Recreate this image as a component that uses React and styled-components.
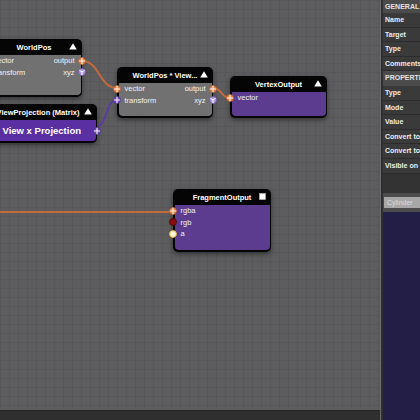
import React from 'react';
import styled, { createGlobalStyle } from 'styled-components';

const GlobalStyle = createGlobalStyle`
  html, body {
    margin: 0;
    padding: 0;
    background: #231e46;
  }
  * {
    box-sizing: border-box;
  }
`;

const ORANGE = '#c4693a';
const PURPLE = '#5b3c9e';

const nodes = [
  {
    id: 'worldpos',
    title: 'WorldPos',
    x: -14, y: 39, w: 96, bodyH: 40,
    tone: 'gray',
    icon: 'triangle',
    rows: [
      { left: 'vector', inPort: 'orange', right: 'output', outPort: 'orange' },
      { left: 'transform', inPort: 'purple', right: 'xyz', outPort: 'xyz' },
    ],
  },
  {
    id: 'viewproj',
    title: 'ViewProjection (Matrix)',
    x: -21, y: 104, w: 118, bodyH: 21,
    tone: 'violet',
    icon: 'triangle',
    value: 'View x Projection',
    valuePort: 'purple',
  },
  {
    id: 'mul',
    title: 'WorldPos * View...',
    x: 117, y: 67, w: 96, bodyH: 33,
    tone: 'gray',
    icon: 'triangle',
    rows: [
      { left: 'vector', inPort: 'orange', right: 'output', outPort: 'orange' },
      { left: 'transform', inPort: 'purple', right: 'xyz', outPort: 'xyz' },
    ],
  },
  {
    id: 'vertex',
    title: 'VertexOutput',
    x: 230, y: 76, w: 97, bodyH: 24,
    tone: 'purple',
    icon: 'triangle',
    rows: [{ left: 'vector', inPort: 'orange' }],
  },
  {
    id: 'fragment',
    title: 'FragmentOutput',
    x: 173, y: 189, w: 98, bodyH: 45,
    tone: 'purple',
    icon: 'square',
    rows: [
      { left: 'rgba', inPort: 'orange' },
      { left: 'rgb', inPort: 'red' },
      { left: 'a', inPort: 'alpha' },
    ],
  },
];

const wires = [
  { d: 'M82 61 C100 61, 99 88, 117 88', color: ORANGE },
  { d: 'M96 126 C108 126, 105 100, 117 100', color: PURPLE },
  { d: 'M213 88 C222 88, 221 98, 230 98', color: ORANGE },
  { d: 'M-10 212 L173 212', color: ORANGE },
];

const inspector = [
  { head: true, label: 'GENERAL' },
  { label: 'Name' },
  { label: 'Target' },
  { label: 'Type' },
  { label: 'Comments' },
  { head: true, label: 'PROPERTIES' },
  { label: 'Type' },
  { label: 'Mode' },
  { label: 'Value' },
  { label: 'Convert to global' },
  { label: 'Convert to linear' },
  { label: 'Visible on fragment' },
];

const PortIcon = ({ kind }) => {
  if (kind === 'red') {
    return (
      <svg width="8" height="8" viewBox="0 0 8 8">
        <circle cx="4" cy="4" r="3.5" fill="#8c0d0d" stroke="#4a0606" strokeWidth="0.8" />
      </svg>
    );
  }
  if (kind === 'alpha') {
    return (
      <svg width="8" height="8" viewBox="0 0 8 8">
        <circle cx="4" cy="4" r="3.4" fill="#fff7d6" stroke="#e2b23a" strokeWidth="1" />
      </svg>
    );
  }
  if (kind === 'xyz') {
    return (
      <svg width="8" height="8" viewBox="0 0 8 8">
        <circle cx="4" cy="4" r="3.5" fill="#a996dc" stroke="#6a52a8" strokeWidth="0.7" />
        <path d="M4 4 L4 7.2 M4 4 L1.3 2.2 M4 4 L6.7 2.2" stroke="#fff" strokeWidth="1" fill="none" />
      </svg>
    );
  }
  const fill = kind === 'purple' ? '#6d4cc0' : '#e0874d';
  const ring = kind === 'purple' ? '#43297e' : '#b25624';
  return (
    <svg width="8" height="8" viewBox="0 0 8 8">
      <circle cx="4" cy="4" r="3.5" fill={fill} stroke={ring} strokeWidth="0.7" />
      <path d="M4 0.8 L4 7.2 M0.8 4 L7.2 4" stroke="#fbeee4" strokeWidth="1.1" />
    </svg>
  );
};

const HeaderIcon = ({ kind }) =>
  kind === 'square' ? (
    <svg width="7" height="7" viewBox="0 0 7 7">
      <rect x="0.5" y="0.5" width="6" height="6" fill="#fff" stroke="#bbb" strokeWidth="0.6" />
    </svg>
  ) : (
    <svg width="8" height="7" viewBox="0 0 8 7">
      <path d="M4 0.3 L7.8 6.6 L0.2 6.6 Z" fill="#fff" />
    </svg>
  );

const GraphNode = ({ node }) => (
  <Node $x={node.x} $y={node.y} $w={node.w}>
    <Header>
      <Title>{node.title}</Title>
      <HeaderIconSlot>
        <HeaderIcon kind={node.icon} />
      </HeaderIconSlot>
    </Header>
    <Body $tone={node.tone} $h={node.bodyH}>
      {node.rows &&
        node.rows.map((row) => (
          <Row key={row.left}>
            {row.inPort && (
              <Port $side="left">
                <PortIcon kind={row.inPort} />
              </Port>
            )}
            <Label>{row.left}</Label>
            {row.right && <Label>{row.right}</Label>}
            {row.outPort && (
              <Port $side="right">
                <PortIcon kind={row.outPort} />
              </Port>
            )}
          </Row>
        ))}
      {node.value && (
        <ValueRow>
          <ValueText>{node.value}</ValueText>
          <Port $side="right">
            <PortIcon kind={node.valuePort} />
          </Port>
        </ValueRow>
      )}
    </Body>
  </Node>
);

const App = () => {
  return (
    <>
      <GlobalStyle />
      <Page>
        <Workspace>
          <Canvas>
            <Wires width="380" height="410" viewBox="0 0 380 410">
              {wires.map((w, i) => (
                <path key={i} d={w.d} stroke={w.color} strokeWidth="2" fill="none" />
              ))}
            </Wires>
            {nodes.map((n) => (
              <GraphNode key={n.id} node={n} />
            ))}
          </Canvas>
          <StatusBar />
        </Workspace>
        <Divider />
        <Sidebar>
          <Inspector>
            {inspector.map((item, i) =>
              item.head ? (
                <SectionHead key={i}>{item.label}</SectionHead>
              ) : (
                <PropRow key={i}>{item.label}</PropRow>
              )
            )}
          </Inspector>
          <SearchStrip>
            <SearchField>Cylinder</SearchField>
          </SearchStrip>
          <Preview />
        </Sidebar>
      </Page>
    </>
  );
};

export default App;

const Page = styled.div`
  display: flex;
  width: 420px;
  height: 420px;
  overflow: hidden;
  background: #231e46;
  font-family: 'Liberation Sans', Arial, sans-serif;
`;

const Workspace = styled.div`
  display: flex;
  flex-direction: column;
  width: 380px;
  flex-shrink: 0;
`;

const Canvas = styled.div`
  position: relative;
  flex: 1;
  overflow: hidden;
  background-color: #5d5c5e;
  background-image: linear-gradient(rgba(0, 0, 0, 0.055) 1px, transparent 1px),
    linear-gradient(90deg, rgba(0, 0, 0, 0.055) 1px, transparent 1px);
  background-size: 9px 9px;
`;

const Wires = styled.svg`
  position: absolute;
  left: 0;
  top: 0;
  overflow: visible;
`;

const StatusBar = styled.div`
  height: 10px;
  background: #2f2f2f;
  border-top: 1px solid #262626;
`;

const Divider = styled.div`
  width: 3px;
  flex-shrink: 0;
  background: #2f2f2f;
  border-left: 1px solid #6a6a6a;
`;

const Sidebar = styled.div`
  flex: 1;
  min-width: 0;
  display: flex;
  flex-direction: column;
  overflow: hidden;
  background: #333333;
`;

const Inspector = styled.div`
  display: flex;
  flex-direction: column;
  height: 193px;
  background: #333333;
`;

const SectionHead = styled.div`
  height: 13px;
  line-height: 13px;
  padding-left: 2px;
  background: #4b4b4b;
  color: #e2e2e2;
  font-size: 7px;
  font-weight: 700;
  white-space: nowrap;
  &:not(:first-child) {
    height: 14.6px;
    line-height: 14.6px;
  }
`;

const PropRow = styled.div`
  height: 14.6px;
  line-height: 14px;
  padding-left: 2px;
  background: #3a3a3a;
  border-bottom: 1px solid #2c2c2c;
  color: #ededed;
  font-size: 7px;
  font-weight: 700;
  white-space: nowrap;
`;

const SearchStrip = styled.div`
  display: flex;
  align-items: center;
  height: 19px;
  padding: 0 0 0 1px;
  background: #4c4c4c;
`;

const SearchField = styled.div`
  flex: 1;
  height: 11px;
  line-height: 11px;
  padding-left: 3px;
  background: #a7a7a7;
  color: #dcdcdc;
  font-size: 7px;
  white-space: nowrap;
`;

const Preview = styled.div`
  flex: 1;
  background: #231e46;
`;

const Node = styled.div`
  position: absolute;
  left: ${(p) => p.$x}px;
  top: ${(p) => p.$y}px;
  width: ${(p) => p.$w}px;
  padding: 0 1.5px 1.5px;
  border-radius: 5px;
  background: #050505;
  box-shadow: 0 2px 5px rgba(0, 0, 0, 0.45);
`;

const Header = styled.div`
  position: relative;
  display: flex;
  align-items: center;
  justify-content: center;
  height: 16px;
`;

const Title = styled.div`
  color: #ffffff;
  font-size: 7.5px;
  font-weight: 700;
  white-space: nowrap;
`;

const HeaderIconSlot = styled.div`
  position: absolute;
  right: 4px;
  top: 4px;
  display: flex;
`;

const tones = {
  gray: '#717171',
  purple: '#5b3c8f',
  violet: '#5a2fa2',
};

const Body = styled.div`
  min-height: ${(p) => p.$h}px;
  background: ${(p) => tones[p.$tone]};
  border-radius: 0 0 4px 4px;
`;

const Row = styled.div`
  position: relative;
  display: flex;
  align-items: center;
  justify-content: space-between;
  height: 11.5px;
  padding: 0 6px;
`;

const Label = styled.span`
  color: #f2f2f2;
  font-size: 7.5px;
  white-space: nowrap;
`;

const Port = styled.div`
  position: absolute;
  top: 50%;
  ${(p) => (p.$side === 'left' ? 'left: -5.5px;' : 'right: -5.5px;')}
  width: 8px;
  height: 8px;
  margin-top: -4px;
  display: flex;
`;

const ValueRow = styled.div`
  position: relative;
  display: flex;
  align-items: center;
  height: 21px;
  padding-left: 22px;
`;

const ValueText = styled.span`
  color: #ffffff;
  font-size: 9.5px;
  font-weight: 700;
  white-space: nowrap;
`;
